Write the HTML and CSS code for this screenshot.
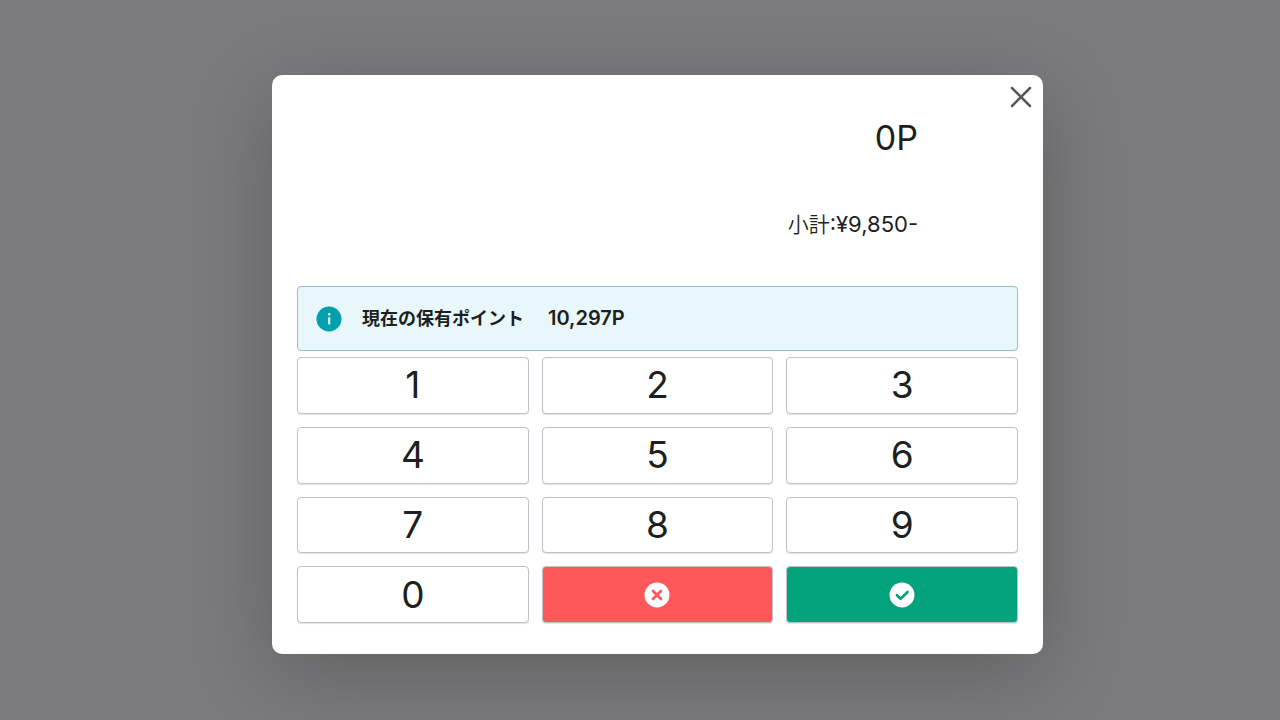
FILE: index.html
```html
<!DOCTYPE html>
<html lang="ja">
<head>
<meta charset="utf-8">
<meta name="viewport" content="width=device-width, initial-scale=1">
<title>ポイント入力</title>
<link rel="stylesheet" href="styles.css">
</head>
<body>
<div class="overlay">
  <main class="dialog" role="dialog" aria-modal="true" aria-label="ポイント入力">
    <button class="close" type="button" aria-label="閉じる">
      <svg class="close-icon" viewBox="0 0 22 22" aria-hidden="true"><path d="M2 2L20 20M20 2L2 20"/></svg>
    </button>
    <div class="amounts">
      <div class="points">0P</div>
      <div class="subtotal"><span class="subtotal-label">小計</span>:¥9,850-</div>
    </div>
    <div class="notice">
      <svg class="icon notice-icon" viewBox="0 0 26 26" aria-hidden="true">
        <circle cx="13" cy="13" r="12.5" fill="#049fae"/>
        <circle cx="13.2" cy="8.2" r="1.2" fill="#e8f7f9"/>
        <path d="M13.2 12.2V17.6" stroke="#e8f7f9" stroke-width="2.2" stroke-linecap="round"/>
      </svg>
      <div class="notice-text">
        <span class="notice-label">現在の保有ポイント</span>
        <span>10,297P</span>
      </div>
    </div>
    <div class="keypad">
      <button class="key" type="button">1</button>
      <button class="key" type="button">2</button>
      <button class="key" type="button">3</button>
      <button class="key" type="button">4</button>
      <button class="key" type="button">5</button>
      <button class="key" type="button">6</button>
      <button class="key" type="button">7</button>
      <button class="key" type="button">8</button>
      <button class="key" type="button">9</button>
      <button class="key" type="button">0</button>
      <button class="key key-clear" type="button" aria-label="クリア">
        <svg class="icon" viewBox="0 0 26 26" aria-hidden="true">
          <circle cx="13" cy="13" r="12.5" fill="#fff"/>
          <path d="M9 9L17 17M17 9L9 17" fill="none" stroke="#ff575a" stroke-width="2.7" stroke-linecap="round"/>
        </svg>
      </button>
      <button class="key key-confirm" type="button" aria-label="確定">
        <svg class="icon" viewBox="0 0 26 26" aria-hidden="true">
          <circle cx="13" cy="13" r="12.5" fill="#fff"/>
          <path d="M7.9 13.2L11.6 16.8L18.6 10" fill="none" stroke="#02a37c" stroke-width="2.6" stroke-linecap="round" stroke-linejoin="round"/>
        </svg>
      </button>
    </div>
  </main>
</div>
</body>
</html>
```
FILE: styles.css
```css
* {
  box-sizing: border-box;
}

body {
  margin: 0;
  background: #7b7b7d;
  color: #1d1f21;
  font-family: Inter, "Noto Sans CJK JP", sans-serif;
}

button {
  margin: 0;
  padding: 0;
  color: inherit;
  font: inherit;
  cursor: pointer;
}

.overlay {
  display: flex;
  align-items: center;
  justify-content: center;
  min-height: 100vh;
  padding: 9px 0 0 35px;
  overflow: hidden;
}

.dialog {
  position: relative;
  width: 100%;
  max-width: 771px;
  padding: 42px 25px 31px;
  border-radius: 10px;
  background: #fff;
  box-shadow: 0 20px 80px rgba(0, 0, 0, 0.22);
}

.close {
  position: absolute;
  top: 6px;
  right: 6px;
  display: grid;
  place-items: center;
  width: 32px;
  height: 32px;
  border: 0;
  background: none;
}

.close-icon {
  width: 22px;
  height: 22px;
  fill: none;
  stroke: #55585c;
  stroke-width: 2.5;
  stroke-linecap: round;
}

.amounts {
  display: flex;
  flex-direction: column;
  gap: 47px;
  padding: 0 100px 45px 0;
  text-align: right;
}

.points {
  font-size: 34px;
  line-height: 42px;
}

.subtotal {
  font-size: 22px;
  line-height: 34px;
}

.subtotal-label {
  font-size: 21px;
  font-weight: 350;
  font-family: "Noto Sans CJK JP", sans-serif;
}

.notice {
  display: flex;
  align-items: center;
  gap: 20px;
  min-height: 65px;
  margin-bottom: 6px;
  padding: 0 18px;
  border: 1px solid #8fc4cd;
  border-radius: 4px;
  background: #e8f7f9;
  font-weight: 600;
}

.notice-text {
  display: flex;
  align-items: baseline;
  gap: 24px;
  font-size: 20px;
  line-height: 28px;
}

.notice-label {
  font-size: 18px;
}

.icon {
  flex: none;
  width: 26px;
  height: 26px;
}

.keypad {
  display: grid;
  grid-template-columns: repeat(3, 1fr);
  grid-auto-rows: 1fr;
  gap: 13px;
  min-height: 266px;
}

.key {
  display: flex;
  align-items: center;
  justify-content: center;
  border: 1px solid #bfc2c7;
  border-radius: 4px;
  background: #fff;
  box-shadow: 0 1px 1px rgba(60, 65, 80, 0.15);
  font-size: 37px;
  line-height: 44px;
}

.key-clear {
  background: #ff575a;
}

.key-confirm {
  background: #02a37c;
}
```
